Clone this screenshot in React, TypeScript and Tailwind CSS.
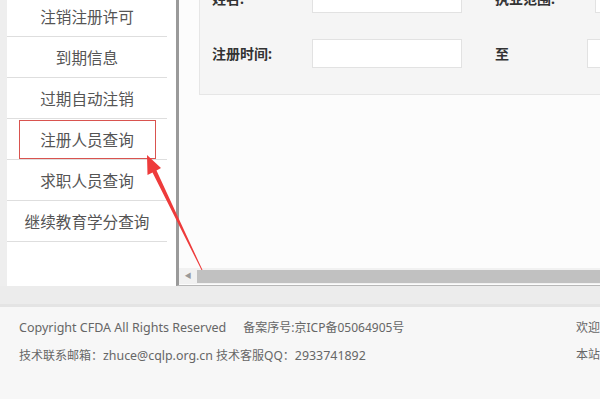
import React from 'react';

const menuItems = [
  '注销注册许可',
  '到期信息',
  '过期自动注销',
  '注册人员查询',
  '求职人员查询',
  '继续教育学分查询',
];

const font = { fontFamily: '"Noto Sans", "Noto Sans CJK SC", sans-serif' };

const Field = ({ label }: { label: string }) => (
  <div className="flex items-center">
    <span className="w-[100px] text-[14px] font-bold text-[#333]">{label}</span>
    <div className="h-[29px] w-[150px] bg-white border border-[#e2e2e2]" />
  </div>
);

const App = () => {
  return (
    <div
      className="relative w-[600px] h-[399px] overflow-hidden bg-[#eeeeee]"
      style={font}
    >
      <div className="flex h-[286px]">
        <div className="w-[7px] shrink-0" />
        <div className="w-[169px] shrink-0 bg-white overflow-hidden">
          <ul className="-mt-[4px] w-[160px]">
            {menuItems.map((item, index) => (
              <li
                key={item}
                className="h-[41px] flex items-center justify-center border-b border-[#dedede] text-[15.6px] text-[#555]"
              >
                {index === 3 ? (
                  <span className="flex items-center justify-center w-[137px] h-[39px] border border-[#d9534f]">
                    <span className="mt-[3px]">{item}</span>
                  </span>
                ) : (
                  <span className="mt-[3px]">{item}</span>
                )}
              </li>
            ))}
          </ul>
        </div>
        <div className="flex-1 flex flex-col bg-[#fcfcfc] border-l-[3px] border-[#9a9a9a] border-b border-b-[#b8b8b8] overflow-hidden">
          <div className="flex-1 pl-[20px]">
            <div className="-mt-[30px] w-[500px] bg-[#f5f5f5] border border-[#e6e6e6] pl-[12px] pt-[13px] pb-[26px] flex flex-col gap-[26px]">
              <div className="flex gap-[33px]">
                <Field label="姓名:" />
                <Field label="执业范围:" />
              </div>
              <div className="flex gap-[33px]">
                <Field label="注册时间:" />
                <div className="flex items-center">
                  <span className="w-[92px] text-[14px] font-bold text-[#333]">至</span>
                  <div className="h-[29px] w-[150px] bg-white border border-[#e2e2e2]" />
                </div>
              </div>
            </div>
          </div>
          <div className="h-[16px] mb-[1px] flex items-center bg-[#f1f1f1]">
            <span className="w-[18px] flex justify-center text-[7px] text-[#999]">◀</span>
            <div className="flex-1 h-[13px] bg-[#c1c1c1]" />
          </div>
        </div>
      </div>
      <div className="h-[18px] bg-[#ececec]" />
      <div className="h-[3px] bg-[#e4e4e4]" />
      <div className="h-[92px] bg-[#f7f7f7] flex text-[12px] text-[#666]">
        <div className="pl-[19px] pt-[12px] flex flex-col gap-[9px]">
          <div className="flex items-baseline">
            <span className="text-[12.5px]">Copyright CFDA All Rights Reserved</span>
            <span className="ml-[17px]">备案序号:京ICP备05064905号</span>
          </div>
          <div>
            技术联系邮箱：<span className="text-[12.4px]">zhuce@cqlp.org.cn</span> 技术客服QQ：
            <span className="text-[12.4px]">2933741892</span>
          </div>
        </div>
        <div className="ml-auto w-[24px] pt-[12px] flex flex-col gap-[9px] whitespace-nowrap">
          <div>欢迎</div>
          <div>本站</div>
        </div>
      </div>
      <svg
        className="absolute left-0 top-0 pointer-events-none"
        width="600"
        height="399"
        viewBox="0 0 600 399"
      >
        <polygon
          points="147,155 161,168 156.5,170.5 202.5,270 201.5,270 152.5,172.5 147.5,175"
          fill="#ee3b3b"
        />
      </svg>
    </div>
  );
};

export default App;
